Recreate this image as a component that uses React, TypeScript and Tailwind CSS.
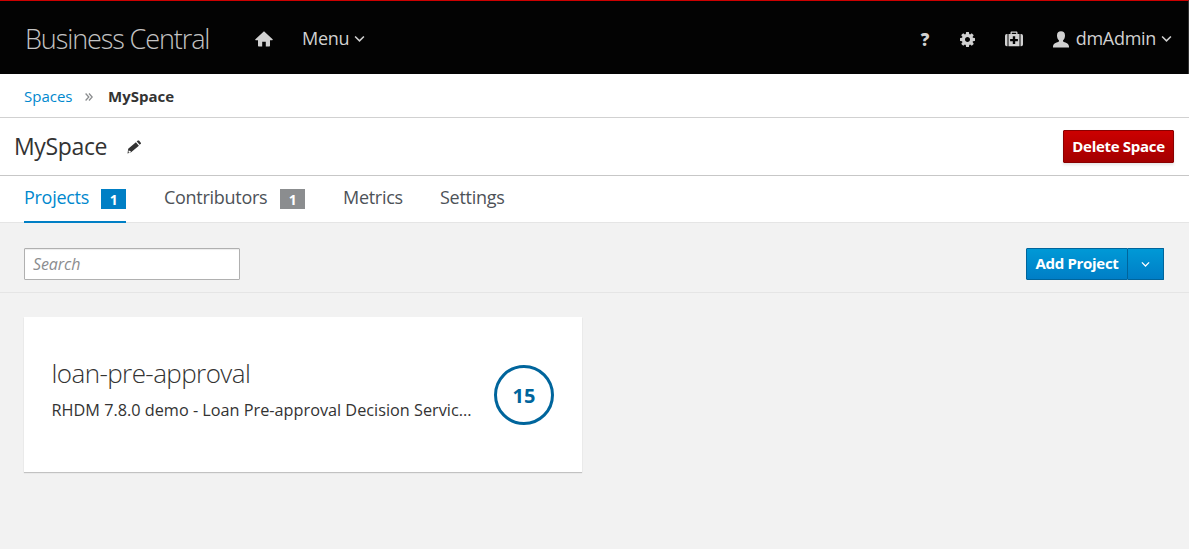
import React from "react";

const Chevron = ({ className = "" }: { className?: string }) => (
  <svg viewBox="0 0 12 8" className={className} fill="none" stroke="currentColor" strokeWidth="1.7">
    <path d="M1.2 1.2 6 6 10.8 1.2" />
  </svg>
);

const HomeIcon = () => (
  <svg viewBox="0 0 18 16" className="h-4 w-[18px]" fill="currentColor">
    <path d="M9 .3.400 8.300c-.4.4-.2.9.3.9H3v5.600c0 .4.300.7.700.7h3.500v-4.700h3.600v4.700h3.500c.4 0 .7-.3.7-.7V9.200h2.300c.5 0 .7-.5.3-.9z" />
  </svg>
);

const GearIcon = () => (
  <svg viewBox="0 0 1536 1536" className="h-[15px] w-[15px]" fill="currentColor">
    <path d="M1024 768q0-106-75-181t-181-75-181 75-75 181 75 181 181 75 181-75 75-181zm512-109v222q0 12-8 23t-20 13l-185 28q-19 54-39 91 35 50 107 138 10 12 10 25t-9 23q-27 37-99 108t-94 71q-12 0-26-9l-138-108q-44 23-91 38-16 136-29 186-7 28-36 28H657q-14 0-24.500-8.500T621 1506l-28-184q-49-16-90-37l-141 107q-10 9-25 9-14 0-25-11-126-114-165-168-7-10-7-23 0-12 8-23 15-21 51-66.500t54-70.500q-27-50-41-99L29 913q-13-2-21-12.500T0 877V655q0-12 8-23t19-13l186-28q14-46 39-92-40-57-107-138-10-12-10-24 0-10 9-23 26-36 98.500-107.500T337 135q13 0 26 10l138 107q44-23 91-38 16-136 29-186 7-28 36-28h222q14 0 24.500 8.500T915 30l28 184q49 16 90 37l142-107q9-9 24-9 13 0 25 10 129 119 165 170 7 8 7 22 0 12-8 23-15 21-51 66.500t-54 70.500q26 50 41 98l183 28q13 2 21 12.500t8 23.500z" />
  </svg>
);

const MedkitIcon = () => (
  <svg viewBox="0 0 18 16" className="h-4 w-[18px]" fill="currentColor" fillRule="evenodd">
    <path d="M2.500 3v12.200h-.7A1.800 1.800 0 0 1 0 13.400V4.800A1.800 1.800 0 0 1 1.800 3zM15.500 3v12.200h.7a1.800 1.800 0 0 0 1.800-1.800V4.800A1.800 1.800 0 0 0 16.200 3z" />
    <path d="M3.500 3h2V1.500C5.500.9 6 .4 6.600.4h4.800c.6 0 1.100.5 1.100 1.100V3h2v12.200h-11zM6.800 1.700V3h4.400V1.700zM7.800 5.200v2.700H5.100v2.400h2.700V13h2.400v-2.700h2.700V7.900h-2.700V5.200z" />
  </svg>
);

const UserIcon = () => (
  <svg viewBox="0 0 16 17" className="h-[17px] w-4" fill="currentColor">
    <path d="M8 .3c2.500 0 4 1.500 4 4.100 0 2.100-.8 3.900-2 5v1.200c1.500.9 5.700 1.600 6 4.800v1H0v-1c.3-3.200 4.500-3.900 6-4.800V9.400c-1.200-1.100-2-2.900-2-5C4 1.800 5.500.3 8 .3z" />
  </svg>
);

const PencilIcon = () => (
  <svg viewBox="0 0 14 14" className="h-[14px] w-[14px]" fill="currentColor">
    <path fillRule="evenodd" d="M1.200 8.700 8.900 2.200l3 3.500-7.800 6.500-3.600 1.200zM1.900 10l-.5 2 .7.700 1.700-.6-.3-1-.9-.1z" />
    <path d="m9.700 1.500 1.100-.9c.4-.3.900-.3 1.200 0l1.800 2.100c.3.400.3.800 0 1.100l-1.100 1z" />
  </svg>
);

export default function App() {
  return (
    <div className="flex h-[549px] w-[1189px] flex-col overflow-hidden bg-[#f2f2f2] font-['Open_Sans',sans-serif] text-[#333]">
      <header className="flex h-[74px] shrink-0 items-center border-t border-r border-t-[#cc0000] border-r-[#333] bg-[#030303] pt-[3px] text-[#d1d1d1]">
        <div className="w-[229px] pl-[25px] text-[27px] font-light tracking-[-1.1px] whitespace-nowrap text-[#c4c4c4]">Business Central</div>
        <div className="flex w-[73px] pl-[26px]"><HomeIcon /></div>
        <div className="flex items-center gap-[5px] text-[18px] tracking-[-0.3px]"><span className="-mt-0.5">Menu</span><Chevron className="h-2 w-[11px]" /></div>
        <div className="ml-auto flex items-center pr-4">
          <span className="w-[39px] pt-px text-[17px] font-extrabold">?</span>
          <span className="w-[45px]"><GearIcon /></span>
          <span className="w-[48px]"><MedkitIcon /></span>
          <span className="w-[23px]"><UserIcon /></span>
          <span className="-mt-0.5 text-[18px] tracking-[-0.3px]">dmAdmin</span>
          <Chevron className="ml-[5px] h-2 w-[11px]" />
        </div>
      </header>
      <nav className="flex h-[44px] shrink-0 items-center border-b border-[#d1d1d1] bg-white pt-px pl-6 text-[15px]">
        <a className="w-[61px] text-[#0088ce]">Spaces</a>
        <svg viewBox="0 0 8 8" className="mt-0.5 mr-[15px] h-2 w-2" fill="none" stroke="#8b8d8f" strokeWidth="1.3"><path d="m.6.500 3.200 3.500L.6 7.500M4 .5 7.200 4 4 7.500" /></svg>
        <span className="font-bold">MySpace</span>
      </nav>
      <section className="flex h-[58px] shrink-0 items-center border-b border-[#c7c7c7] bg-white pr-[15px] pl-[14px]">
        <h1 className="w-[113px] text-[23px] tracking-[-0.35px]">MySpace</h1>
        <PencilIcon />
        <button className="ml-auto h-[33px] w-[111px] rounded-[1px] border border-[#8b0000] bg-linear-to-b from-[#cc0000] to-[#a30000] text-[15px] font-bold tracking-[-0.3px] whitespace-nowrap text-white shadow-[0_2px_3px_rgba(3,3,3,0.1)]">Delete Space</button>
      </section>
      <div className="flex h-[47px] shrink-0 border-b border-[#e5e5e5] bg-white pl-6 text-[18px] tracking-[-0.28px] text-[#4d5258]">
        <div className="mr-[38px] -mb-px flex w-[102px] items-center justify-between border-b-2 border-[#007fc5] text-[#0088ce]">
          <span className="-mt-0.5">Projects</span><span className="flex h-5 w-[25px] items-center justify-center bg-[#007fc5] pt-px text-[14px] font-bold text-white">1</span>
        </div>
        <div className="mr-[38px] flex w-[141px] items-center justify-between">
          <span className="-mt-[3px]">Contributors</span><span className="flex h-5 w-[25px] items-center justify-center bg-[#8b8d8f] pt-px text-[14px] font-bold text-white">1</span>
        </div>
        <div className="-mt-[3px] flex w-[97px] items-center">Metrics</div>
        <div className="-mt-[3px] flex items-center">Settings</div>
      </div>
      <div className="flex h-[70px] shrink-0 items-center justify-between border-b border-[#e5e5e5] pt-[13px] pr-[25px] pl-6">
        <input placeholder="Search" className="h-8 w-[216px] rounded-[1px] border border-[#b0b0b0] bg-white px-2 text-[16px] tracking-[-0.1px] shadow-[inset_0_1px_1px_rgba(3,3,3,0.075)] placeholder:text-[#8b8d8f] placeholder:italic" />
        <div className="flex h-8 text-white">
          <button className="w-[102px] rounded-l-[1px] border border-[#00659c] bg-linear-to-b from-[#0099d6] to-[#007ec6] px-0 pb-0.5 text-[15px] font-bold tracking-[-0.3px] whitespace-nowrap">Add Project</button>
          <button className="flex w-[36px] items-center justify-center rounded-r-[1px] border border-l-0 border-[#00659c] bg-linear-to-b from-[#0099d6] to-[#007ec6]"><Chevron className="h-[7px] w-[9px]" /></button>
        </div>
      </div>
      <main className="px-6 pt-6">
        <article className="flex h-[155px] w-[558px] items-center justify-between bg-white pr-7 pl-[27.500px] shadow-[0_1px_1px_rgba(3,3,3,0.2)]">
          <div className="-mt-3">
            <h2 className="text-[26px] leading-[34px] font-light tracking-[-0.58px]">loan-pre-approval</h2>
            <p className="mt-2 text-[16.250px] leading-6 whitespace-nowrap">RHDM 7.8.0 demo - Loan Pre-approval Decision Servic...</p>
          </div>
          <div className="flex h-[60px] w-[60px] items-center justify-center rounded-full border-3 border-[#00659c] pt-0.5 text-[20px] font-bold text-[#00659c]">15</div>
        </article>
      </main>
    </div>
  );
}
